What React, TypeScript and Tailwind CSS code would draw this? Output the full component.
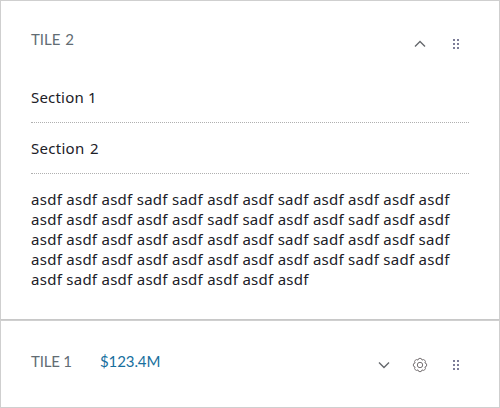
import React from "react";

const lines = [
  "asdf asdf asdf sadf sadf asdf asdf sadf asdf asdf asdf asdf",
  "asdf asdf asdf asdf asdf sadf sadf asdf asdf sadf asdf asdf",
  "asdf asdf asdf asdf asdf asdf asdf sadf sadf asdf asdf sadf",
  "asdf asdf asdf asdf asdf asdf asdf asdf asdf sadf sadf asdf",
  "asdf sadf asdf asdf asdf asdf asdf asdf",
];

function Chevron({ up = false }: { up?: boolean }) {
  return (
    <svg width="12" height="8" viewBox="0 0 12 8" fill="none" stroke="#65686d" strokeWidth="1.4">
      <path d={up ? "M1 6.5 6 1.5 11 6.5" : "M1 1.5 6 6.5 11 1.5"} />
    </svg>
  );
}

function Grip() {
  return (
    <span className="grid grid-cols-2 gap-[2px]">
      {[0, 1, 2, 3, 4, 5].map((i) => (
        <span key={i} className="size-[2px] bg-[#7c7d98]" />
      ))}
    </span>
  );
}

function Gear() {
  const lobes = Array.from({ length: 8 }, (_, i) => {
    const point = (deg: number) => {
      const a = (deg * Math.PI) / 180;
      return `${(7 + 5.3 * Math.cos(a)).toFixed(2)} ${(7 + 5.3 * Math.sin(a)).toFixed(2)}`;
    };
    return `${i === 0 ? `M${point(-22.5)}` : ""}A2.04 2.04 0 0 1 ${point(i * 45 + 22.5)}`;
  }).join("");
  return (
    <svg className="overflow-visible" width="14" height="14" viewBox="0 0 14 14" fill="none" stroke="#777274" strokeWidth="1">
      <path d={lobes + "Z"} />
      <circle cx="7" cy="7" r="2.7" />
    </svg>
  );
}

export default function App() {
  return (
    <main className="flex h-[408px] w-[500px] flex-col bg-white font-['Noto_Sans','Liberation_Sans',sans-serif] text-[15px] leading-5 tracking-[0.27px] text-[#202027]">
      <section className="h-80 border border-[#cfcfcf] border-b-[#c8c8c8] px-[30px] pt-7">
        <header className="flex h-[31px] items-start justify-between font-['Lato','Liberation_Sans',sans-serif] text-[#626c73]">
          <h2 className="tracking-[0px] [word-spacing:1px]">TILE 2</h2>
          <div className="mr-[10px] mt-[10px] flex items-center gap-[27px]">
            <Chevron up />
            <Grip />
          </div>
        </header>
        <div className="flex h-[63px] items-end border-b border-dotted border-[#b0b0b0] pb-[15px] tracking-[0.2px]">Section 1</div>
        <div className="flex h-[51px] items-end border-b border-dotted border-[#b0b0b0] pb-[15px] [word-spacing:1.5px]">Section 2</div>
        <div className="whitespace-nowrap pt-[15px]">
          {lines.map((line) => <p key={line}>{line}</p>)}
        </div>
      </section>
      <section className="flex h-[88px] items-start justify-between border border-[#cfcfcf] px-[30px] pt-[30px] font-['Lato','Liberation_Sans',sans-serif] tracking-[0px]">
        <div className="flex gap-[29px]">
          <h2 className="w-10 whitespace-nowrap tracking-[-0.2px] text-[#626c73]">TILE 1</h2>
          <span className="tracking-[-0.1px] text-[#176f9e]">$123.4M</span>
        </div>
        <div className="mr-[10px] mt-[7px] flex items-center">
          <Chevron />
          <span className="ml-[23px]"><Gear /></span>
          <span className="ml-[26px]"><Grip /></span>
        </div>
      </section>
    </main>
  );
}
